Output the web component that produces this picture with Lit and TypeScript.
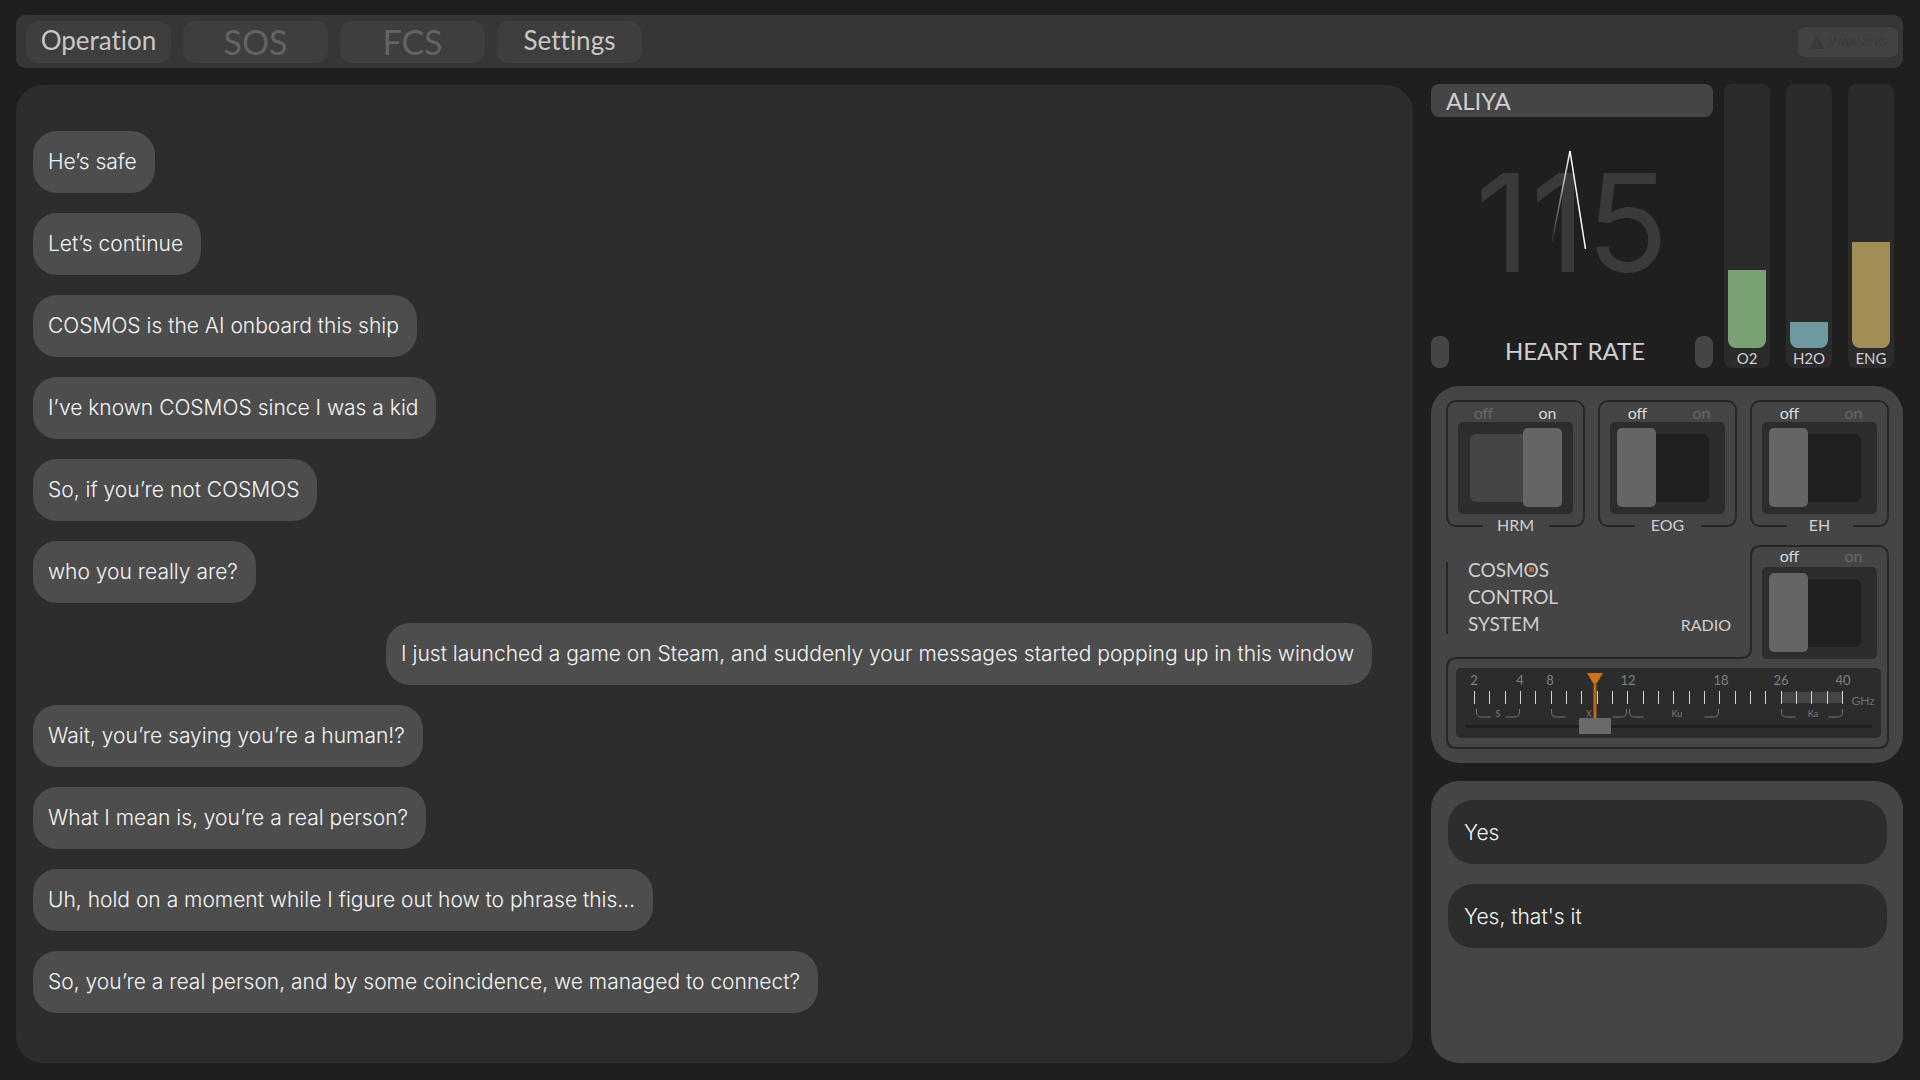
import { LitElement, html, svg, css } from "lit";
import { customElement, property, state } from "lit/decorators.js";
import { classMap } from "lit/directives/class-map.js";

interface Message {
  text: string;
  own?: boolean;
}

const MESSAGES: Message[] = [
  { text: "He’s safe" },
  { text: "Let’s continue" },
  { text: "COSMOS is the AI onboard this ship" },
  { text: "I’ve known COSMOS since I was a kid" },
  { text: "So, if you’re not COSMOS" },
  { text: "who you really are?" },
  { text: "I just launched a game on Steam, and suddenly your messages started popping up in this window", own: true },
  { text: "Wait, you’re saying you’re a human!?" },
  { text: "What I mean is, you’re a real person?" },
  { text: "Uh, hold on a moment while I figure out how to phrase this…" },
  { text: "So, you’re a real person, and by some coincidence, we managed to connect?" },
];

const TABS = [
  { label: "Operation", locked: false },
  { label: "SOS", locked: true },
  { label: "FCS", locked: true },
  { label: "Settings", locked: false },
];

const GAUGES = [
  { label: "O2", level: 29.5, kind: "oxygen" },
  { label: "H2O", level: 10, kind: "water" },
  { label: "ENG", level: 40, kind: "energy" },
];

const REPLIES = ["Yes", "Yes, that's it"];

@customElement("toggle-switch")
export class ToggleSwitch extends LitElement {
  @property() name = "";
  @property({ type: Boolean, reflect: true }) on = false;
  @property({ type: Boolean, reflect: true }) bare = false;

  static styles = css`
    :host {
      display: block;
    }
    .frame {
      display: flex;
      flex-direction: column;
      align-items: center;
      box-sizing: border-box;
    }
    .frame.boxed {
      height: 127px;
      border: 2px solid #272727;
      border-radius: 10px;
    }
    .states {
      display: grid;
      grid-template-columns: 64px 64px;
      height: 20px;
      line-height: 22px;
      font-size: 16px;
      text-align: center;
      color: #686868;
    }
    .states.idle {
      padding-left: 4px;
    }
    .bare .states {
      height: 22px;
    }
    .lit {
      color: #dadada;
    }
    .bed {
      appearance: none;
      position: relative;
      flex: none;
      width: 115px;
      height: 92px;
      margin: 0;
      border-radius: 5px;
      background: #2d2d2d;
      cursor: pointer;
    }
    .bed::before,
    .bed::after {
      content: "";
      position: absolute;
    }
    .bed::before {
      top: 12px;
      bottom: 12px;
      left: 12px;
      right: 16px;
      border-radius: 6px;
      background: #202020;
    }
    .bed::after {
      top: 6px;
      bottom: 7px;
      left: 7px;
      width: 39px;
      border-radius: 5px;
      background: #656565;
    }
    .bed:checked::before {
      background: #454545;
    }
    .bed:checked::after {
      left: 65px;
    }
    .name {
      flex: none;
      width: 66px;
      line-height: 22px;
      font-size: 16px;
      text-align: center;
      color: #cfcfcf;
      background: #454545;
    }
  `;

  render() {
    return html`
      <label class=${classMap({ frame: true, boxed: !this.bare, bare: this.bare })}>
        <span class=${classMap({ states: true, idle: !this.on })}>
          <span class=${classMap({ lit: !this.on })}>off</span>
          <span class=${classMap({ lit: this.on })}>on</span>
        </span>
        <input
          class="bed"
          type="checkbox"
          role="switch"
          aria-label=${this.name}
          .checked=${this.on}
          @change=${(e: Event) => (this.on = (e.target as HTMLInputElement).checked)}
        />
        ${this.bare ? null : html`<span class="name">${this.name}</span>`}
      </label>
    `;
  }
}

@customElement("frequency-tuner")
export class FrequencyTuner extends LitElement {
  @state() private value = 302;

  static styles = css`
    :host {
      display: block;
    }
    .bed {
      position: relative;
      height: 70px;
      border-radius: 5px;
      background: #2c2c2c;
    }
    .scale {
      display: block;
      width: 100%;
      height: 70px;
    }
    .number {
      font-size: 13px;
      fill: #808080;
      text-anchor: middle;
    }
    .band {
      font-size: 9px;
      fill: #7c7c7c;
      text-anchor: middle;
    }
    .unit {
      font-size: 12px;
      fill: #6e6e6e;
      text-anchor: middle;
    }
    .slider {
      appearance: none;
      position: absolute;
      left: 10px;
      bottom: 4px;
      width: calc(100% - 19px);
      height: 16px;
      margin: 0;
      background: none;
      cursor: pointer;
    }
    .slider::-webkit-slider-runnable-track {
      height: 16px;
      background: linear-gradient(#1f1f1f, #1f1f1f) center / 100% 3px no-repeat;
    }
    .slider::-webkit-slider-thumb {
      appearance: none;
      width: 32px;
      height: 16px;
      border-radius: 1px;
      background: #6a6a6a;
    }
  `;

  private bracket(from: number, to: number) {
    return svg`<path d="M${from} 41v3q0 5 5 5h9M${to} 41v3q0 5 -5 5h-9" fill="none" stroke="#747474" />`;
  }

  render() {
    const needle = 26 + (this.value / 1000) * 374;
    const ticks = Array.from({ length: 25 }, (_, i) => 18.5 + Math.round(i * 15.33));
    const numbers: [string, number][] = [["2", 18], ["4", 64], ["8", 94], ["12", 172], ["18", 265], ["26", 325], ["40", 387]];
    const bands: [string, number][] = [["S", 42], ["X", 133], ["Ku", 221], ["Ka", 357]];
    const brackets: [number, number][] = [[20.5, 63.5], [95.5, 170.5], [173.5, 262.5], [325.5, 386.5]];
    return html`
      <div class="bed">
        <svg class="scale" viewBox="0 0 425 70" aria-hidden="true">
          <rect x="325" y="24" width="62" height="11" fill="#454545" />
          ${ticks.map((x) => svg`<path d="M${x} 23v13" stroke="#d4d4d4" />`)}
          ${numbers.map(([t, x]) => svg`<text class="number" x=${x} y="17">${t}</text>`)}
          ${brackets.map(([a, b]) => this.bracket(a, b))}
          ${bands.map(([t, x]) => svg`<text class="band" x=${x} y="49">${t}</text>`)}
          <text class="unit" x="407" y="37">GHz</text>
          <path d="M${needle} 8v44" stroke="#bd6a17" stroke-width="3" />
          <path d="M${needle - 8} 5h16l-6 10h-4z" fill="#cc7418" />
        </svg>
        <input
          class="slider"
          type="range"
          min="0"
          max="1000"
          aria-label="Radio frequency"
          .value=${String(this.value)}
          @input=${(e: Event) => (this.value = Number((e.target as HTMLInputElement).value))}
        />
      </div>
    `;
  }
}

@customElement("app-root")
export class AppRoot extends LitElement {
  static styles = css`
    :host {
      display: block;
      font-family: Lato, "Open Sans", sans-serif;
      color: #cfcfcf;
      background: #1f1f1f;
    }
    button {
      border: 0;
      font: inherit;
      color: inherit;
      cursor: pointer;
    }
    .page {
      display: flex;
      flex-direction: column;
      gap: 16px;
      box-sizing: border-box;
      min-height: 100vh;
      padding: 15px 17px 17px 16px;
    }
    .topbar {
      display: flex;
      align-items: center;
      gap: 12px;
      box-sizing: border-box;
      height: 53px;
      padding: 0 5px 0 10px;
      border-radius: 9px;
      background: #363636;
    }
    .tabs {
      display: flex;
      flex: 1;
      gap: 12px;
    }
    .tab {
      width: 145px;
      height: 42px;
      padding: 0 0 4px;
      border-radius: 12px;
      font-size: 26px;
      line-height: 38px;
      font-variant-ligatures: none;
      color: #c8c8c8;
      background: #3e3e3e;
    }
    .tab.locked {
      padding: 0;
      font-size: 34px;
      color: #636363;
    }
    .warning {
      display: flex;
      align-items: center;
      justify-content: center;
      gap: 4px;
      width: 100px;
      height: 30px;
      padding: 0;
      border-radius: 7px;
      font-size: 12px;
      color: #393939;
      background: #424242;
    }
    .body {
      display: grid;
      grid-template-columns: minmax(0, 1fr) 472px;
      gap: 18px;
      flex: 1;
    }
    .chat {
      display: flex;
      flex-direction: column;
      gap: 20px;
      margin: 1px 0 0;
      padding: 46px 41px 46px 17px;
      border-radius: 27px;
      font-family: Inter, "Noto Sans", sans-serif;
      font-size: 21px;
      font-weight: 350;
      line-height: 62px;
      list-style: none;
      color: #f6f6f6;
      background: #2d2d2d;
    }
    .bubble {
      align-self: flex-start;
      padding: 0 18px 0 15px;
      border-radius: 24px;
      background: #4d4d4d;
    }
    .bubble.own {
      align-self: flex-end;
    }
    .side {
      display: flex;
      flex-direction: column;
      gap: 18px;
    }
    .vitals {
      display: flex;
      gap: 11px;
      height: 284px;
      padding-right: 9px;
    }
    .monitor {
      display: flex;
      flex: 1;
      flex-direction: column;
    }
    .patient {
      margin: 0;
      padding-left: 15px;
      border-radius: 8px;
      font-size: 24px;
      font-weight: 400;
      line-height: 33px;
      background: #454545;
    }
    .pulse {
      display: grid;
      flex: 1;
      place-items: center;
    }
    .bpm,
    .trace {
      grid-area: 1 / 1;
    }
    .bpm {
      padding-bottom: 8px;
      font-family: Inter, sans-serif;
      font-size: 136px;
      line-height: 140px;
      color: #3a3a3a;
    }
    .trace {
      width: 282px;
      height: 219px;
    }
    .caption {
      display: flex;
      align-items: center;
      justify-content: space-between;
      height: 32px;
      font-size: 24px;
      line-height: 28px;
    }
    .heading {
      padding: 0 0 2px 6px;
    }
    .stud {
      width: 18px;
      height: 32px;
      border-radius: 8px;
      background: #454545;
    }
    .gauges {
      display: flex;
      gap: 16px;
    }
    .gauge {
      display: flex;
      flex-direction: column;
      width: 46px;
      border-radius: 8px;
      font-size: 15px;
      line-height: 20px;
      text-align: center;
      background: #2b2b2b;
    }
    .tank {
      display: flex;
      flex: 1;
      align-items: flex-end;
      padding: 0 4px;
    }
    .fill {
      flex: 1;
      border-radius: 0 0 8px 8px;
    }
    .fill.oxygen {
      background: #79a174;
    }
    .fill.water {
      background: #6f99a1;
    }
    .fill.energy {
      background: #a18d56;
    }
    .controls {
      display: flex;
      flex-direction: column;
      gap: 18px;
      padding: 14px 14px 14px 15px;
      border-radius: 28px;
      background: #454545;
    }
    .switches {
      display: flex;
      justify-content: space-between;
    }
    .switches > * {
      width: 139px;
    }
    .radio {
      display: grid;
      position: relative;
      grid-template-columns: 1fr 139px;
      row-gap: 9px;
      padding-bottom: 11px;
    }
    .outline {
      position: absolute;
      inset: 0;
      width: 100%;
      height: 100%;
      pointer-events: none;
    }
    .brand {
      display: flex;
      align-items: flex-start;
      padding: 11px 19px 0 0;
    }
    .rule {
      align-self: stretch;
      width: 2px;
      margin: 6px 20px 25px 0;
      background: #272727;
    }
    .system {
      flex: 1;
      margin: 0;
      font-size: 19px;
      font-weight: 400;
      line-height: 27px;
    }
    .eye {
      position: relative;
    }
    .eye::after {
      content: "";
      position: absolute;
      top: 9px;
      left: 5px;
      width: 5px;
      height: 5px;
      border-radius: 1px;
      background: #c26a25;
    }
    .radio-label {
      margin-top: 54px;
      font-size: 16px;
      line-height: 29px;
    }
    .tuner {
      grid-column: 1 / -1;
      margin: 0 8px 0 10px;
    }
    .replies {
      display: flex;
      flex: 1;
      flex-direction: column;
      gap: 20px;
      padding: 19px 16px 19px 17px;
      border-radius: 28px;
      background: #454545;
    }
    .reply {
      height: 64px;
      padding: 0 16px;
      border-radius: 25px;
      font-family: Inter, "Noto Sans", sans-serif;
      font-size: 21px;
      font-weight: 350;
      text-align: left;
      color: #f8f8f8;
      background: #2d2d2d;
    }
  `;

  render() {
    return html`
      <div class="page">
        <header class="topbar">
          <nav class="tabs">
            ${TABS.map(
              (t) => html`<button class=${classMap({ tab: true, locked: t.locked })} ?disabled=${t.locked}>${t.label}</button>`
            )}
          </nav>
          <button class="warning">
            <svg width="16" height="16" viewBox="0 0 16 16" aria-hidden="true">
              <path d="M8 1L15.5 15H.5z" fill="currentColor" />
              <path d="M8 6v5M8 12v1.500" stroke="#424242" stroke-width="1" />
            </svg>
            WARNING
          </button>
        </header>
        <main class="body">
          <ol class="chat">
            ${MESSAGES.map((m) => html`<li class=${classMap({ bubble: true, own: !!m.own })}>${m.text}</li>`)}
          </ol>
          <aside class="side">
            <section class="vitals">
              <div class="monitor">
                <h2 class="patient">ALIYA</h2>
                <div class="pulse">
                  <span class="bpm">115</span>
                  <svg class="trace" viewBox="0 0 282 219" aria-hidden="true">
                    <defs>
                      <linearGradient id="fade" gradientUnits="userSpaceOnUse" x1="0" y1="34" x2="0" y2="125">
                        <stop offset="0" stop-color="#ffffff" />
                        <stop offset="0.500" stop-color="#ffffff" stop-opacity="0.450" />
                        <stop offset="1" stop-color="#ffffff" stop-opacity="0.050" />
                      </linearGradient>
                    </defs>
                    <path d="M121 125L139 34" stroke="url(#fade)" stroke-width="1.500" />
                    <path d="M139 34L154.500 132" stroke="#ffffff" stroke-width="1.500" />
                  </svg>
                </div>
                <div class="caption">
                  <span class="stud"></span>
                  <span class="heading">HEART RATE</span>
                  <span class="stud"></span>
                </div>
              </div>
              <div class="gauges">
                ${GAUGES.map(
                  (g) => html`
                    <div class="gauge" role="meter" aria-label=${g.label} aria-valuenow=${g.level}>
                      <div class="tank"><div class="fill ${g.kind}" style="height:${g.level}%"></div></div>
                      <span>${g.label}</span>
                    </div>
                  `
                )}
              </div>
            </section>
            <section class="controls">
              <div class="switches">
                <toggle-switch name="HRM" on></toggle-switch>
                <toggle-switch name="EOG"></toggle-switch>
                <toggle-switch name="EH"></toggle-switch>
              </div>
              <div class="radio">
                <svg class="outline" viewBox="0 0 443 204" preserveAspectRatio="none" aria-hidden="true">
                  <path
                    d="M11 113H295Q305 113 305 103V11Q305 1 315 1H432Q442 1 442 11V193Q442 203 432 203H11Q1 203 1 193V123Q1 113 11 113z"
                    fill="none"
                    stroke="#272727"
                    stroke-width="2"
                  />
                </svg>
                <div class="brand">
                  <span class="rule"></span>
                  <h2 class="system">COSM<span class="eye">O</span>S<br />CONTROL<br />SYSTEM</h2>
                  <span class="radio-label">RADIO</span>
                </div>
                <toggle-switch name="Radio" bare></toggle-switch>
                <frequency-tuner class="tuner"></frequency-tuner>
              </div>
            </section>
            <section class="replies">
              ${REPLIES.map((r) => html`<button class="reply">${r}</button>`)}
            </section>
          </aside>
        </main>
      </div>
    `;
  }
}
